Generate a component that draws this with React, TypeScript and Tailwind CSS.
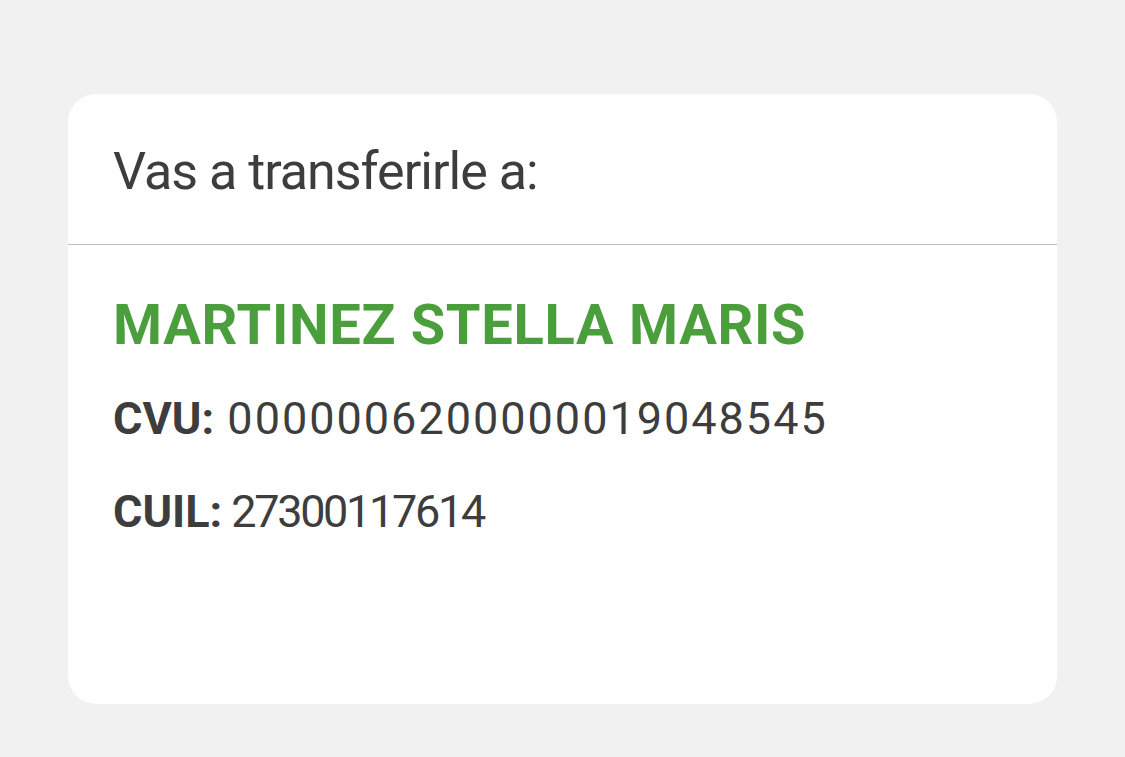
export default function App() {
  return (
    <div className="min-h-screen bg-[#f1f1f1] px-[68px] pt-[94px] font-['Roboto',sans-serif] text-[#3d3d3d]">
      <div className="h-[610px] w-[989px] overflow-hidden rounded-[28px] bg-white">
        <div className="flex h-[151px] items-center border-b border-[#bdbdbd] px-[45px] pt-[6px]">
          <span className="text-[52px] leading-none tracking-[-1px]">Vas a transferirle a:</span>
        </div>
        <div className="flex flex-col px-[45px] pt-[52px]">
          <span className="text-[56px] font-bold leading-[56px] tracking-[0.7px] text-[#4a9e3c]">
            MARTINEZ STELLA MARIS
          </span>
          <span className="mt-[43px] text-[45px] leading-[45px] tracking-[2px]">
            <b className="font-bold tracking-normal">CVU:</b> 0000006200000019048545
          </span>
          <span className="mt-[48px] text-[45px] leading-[45px] tracking-[-2.3px]">
            <b className="font-bold tracking-normal">CUIL:</b> 27300117614
          </span>
        </div>
      </div>
    </div>
  );
}
